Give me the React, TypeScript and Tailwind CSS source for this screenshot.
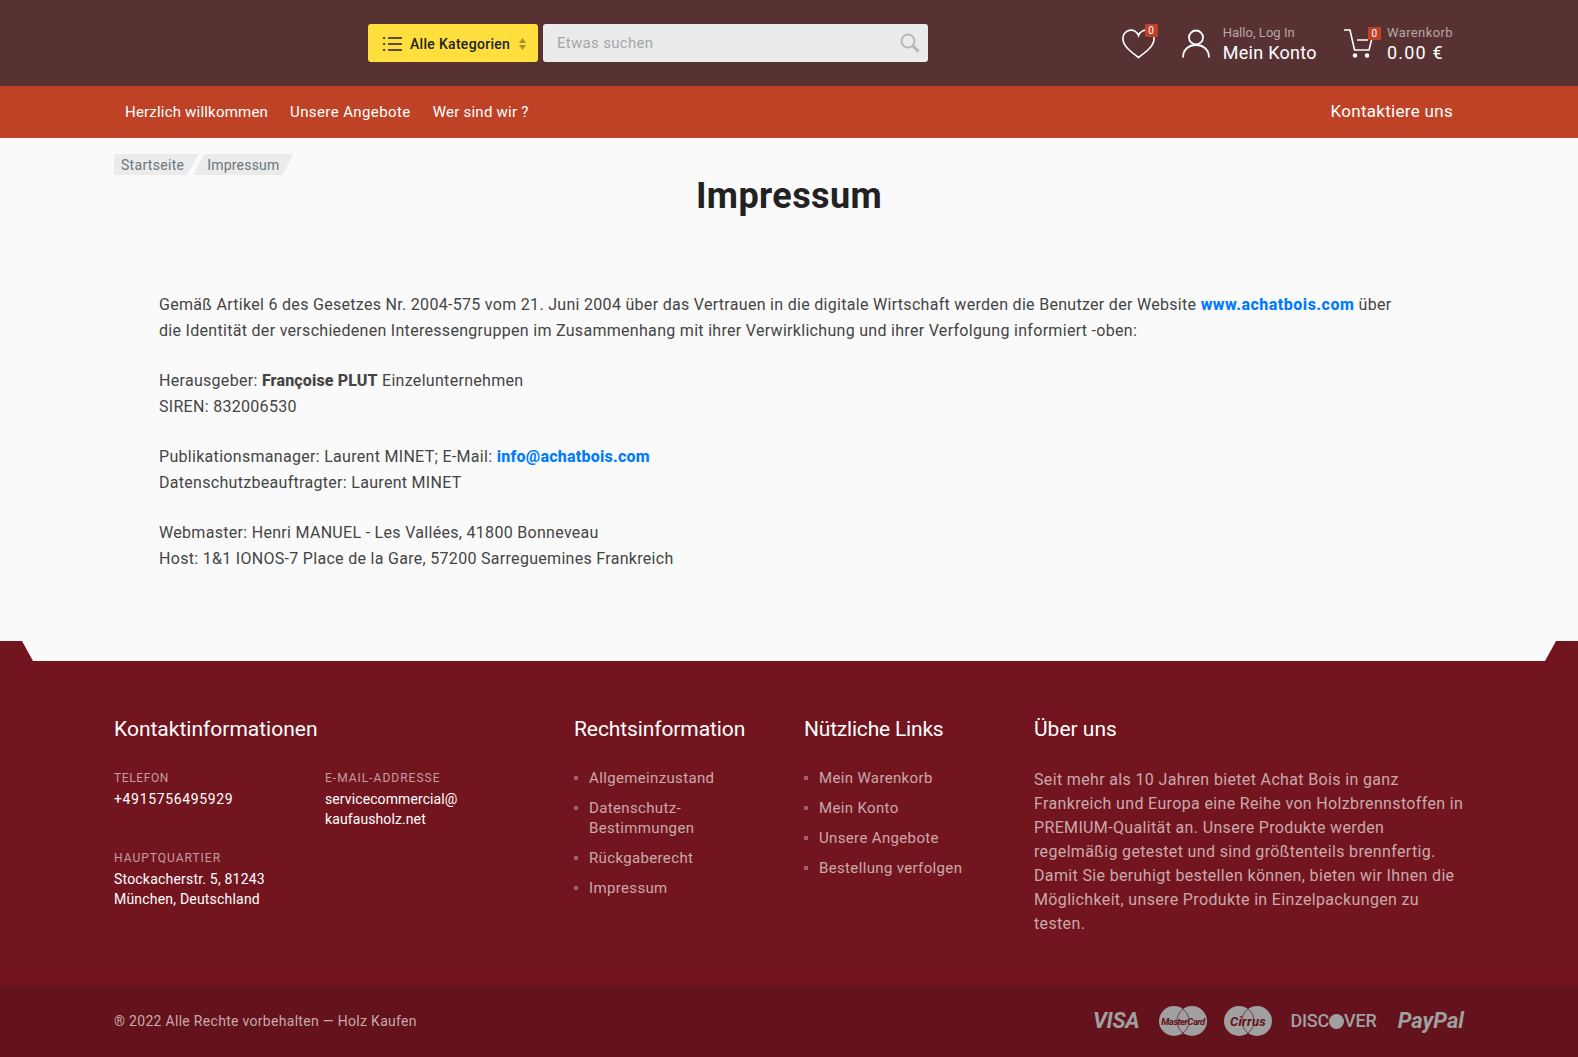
import React from 'react';

const legal = ['Allgemeinzustand', 'Datenschutz-\nBestimmungen', 'Rückgaberecht', 'Impressum'];
const useful = ['Mein Warenkorb', 'Mein Konto', 'Unsere Angebote', 'Bestellung verfolgen'];

const FooterList = ({ items }: { items: string[] }) => (
  <ul className="mt-[25px] flex flex-col gap-2.5">
    {items.map(item => (
      <li key={item} className="flex text-[15px] leading-5 text-[#c9a9ac] whitespace-pre-line tracking-[0.35px]">
        <span className="mt-2 mr-[11px] w-1 h-1 shrink-0 bg-[#9c6168]" />
        {item}
      </li>
    ))}
  </ul>
);

const Badge = ({ className }: { className: string }) => (
  <span className={`absolute w-[13px] h-[13px] bg-[#bf4226] text-white text-[10px] leading-[13px] text-center rounded-[1px] ${className}`}>0</span>
);

const PaymentLogos = () => (
  <div className="flex items-center text-[#a0a0a0]">
    <span className="text-[22px] font-bold italic tracking-[-0.3px] leading-none mr-5">VISA</span>
    <svg width="48" height="30" viewBox="0 0 48 30" className="mr-[17px]">
      <circle cx="15" cy="15" r="15" fill="#a0a0a0" />
      <circle cx="33" cy="15" r="15" fill="#a0a0a0" />
      <path d="M24 3a15 15 0 0 1 0 24a15 15 0 0 1 0-24z" fill="none" stroke="#64121b" strokeWidth="0.7" />
      <text x="24" y="18.500" textAnchor="middle" fontSize="9.500" fontWeight="700" fontStyle="italic" fill="#64121b" letterSpacing="-0.5">MasterCard</text>
    </svg>
    <svg width="48" height="30" viewBox="0 0 48 30" className="mr-[18px]">
      <circle cx="15" cy="15" r="15" fill="#a0a0a0" />
      <circle cx="33" cy="15" r="15" fill="#a0a0a0" />
      <path d="M24 3a15 15 0 0 1 0 24a15 15 0 0 1 0-24z" fill="none" stroke="#64121b" strokeWidth="0.7" />
      <text x="24" y="19.500" textAnchor="middle" fontSize="13" fontWeight="700" fontStyle="italic" fill="#64121b">Cirrus</text>
    </svg>
    <span className="flex items-center text-[18px] tracking-[-0.2px] leading-none font-medium mr-[21px]">
      DISC<span className="inline-block w-[15px] h-[15px] rounded-full bg-[#a0a0a0]" />VER
    </span>
    <span className="text-[22px] font-bold italic leading-none tracking-[0px]">PayPal</span>
  </div>
);

export default function App() {
  return (
    <div className="min-h-[1057px] bg-[#fafafa] text-[#444] font-['Roboto',sans-serif] tracking-[0.3px]">
      <header className="h-[86px] bg-[#583232] flex items-center pl-[368px] pr-[125px]">
        <button className="w-[170px] h-[38px] bg-[#ffdf3d] rounded-[3px] flex items-center pl-3.5 pr-3 pt-px text-[#222] text-sm font-medium">
          <svg width="20" height="16" viewBox="0 0 20 16" className="mr-2 shrink-0" stroke="#222" strokeWidth="1.6">
            <path d="M6 2h14M6 8h14M6 14h14M1 2h2.2M1 8h2.2M1 14h2.2" />
          </svg>
          Alle Kategorien
          <svg width="7" height="12" viewBox="0 0 7 12" className="ml-auto" fill="#a89330">
            <path d="M3.500 0L7 5H0zM3.500 12L0 7h7z" />
          </svg>
        </button>
        <div className="ml-[5px] w-[385px] h-[38px] bg-[#ebebeb] rounded-[3px] flex items-center justify-between pl-3.5 pr-2 text-[#a3a7aa] text-[15px]">
          Etwas suchen
          <svg width="20" height="20" viewBox="0 0 20 20" fill="none" stroke="#b5b5b5">
            <circle cx="8" cy="8" r="6.500" strokeWidth="1.800" />
            <path d="M12.500 12.500L18.500 18.500" strokeWidth="3" />
          </svg>
        </div>
        <div className="ml-auto flex items-center text-white">
          <div className="relative w-[36px] h-[34px] mr-6">
            <svg width="33" height="30" viewBox="0 0 33 30" fill="none" stroke="white" strokeWidth="1.600" className="mt-[3px]">
              <path d="M16.500 28.500C9 23 1 17 1 10A8 8 0 0 1 16.500 6.500A8 8 0 0 1 32 10c0 7-8 13-15.500 18.500z" />
            </svg>
            <Badge className="-top-[2px] right-0" />
          </div>
          <svg width="28" height="29" viewBox="0 0 28 29" fill="none" stroke="white" strokeWidth="1.800" className="mr-[13px]">
            <circle cx="14" cy="8.500" r="7" />
            <path d="M1 28.500c0-8 6-12.500 13-12.500s13 4.500 13 12.500" />
          </svg>
          <div className="mr-[27px]">
            <p className="text-[13px] leading-4 text-[#b9a6a6] mt-[3px] tracking-[0.05px]">Hallo, Log In</p>
            <p className="text-lg leading-6 tracking-[0.3px]">Mein Konto</p>
          </div>
          <div className="relative w-[32px] h-[29px] mr-[11px]">
            <svg width="32" height="29" viewBox="0 0 32 29" fill="none" stroke="white" strokeWidth="1.600">
              <path d="M0 1h6l4.500 20h14.500l3-12M13 11h11" />
              <circle cx="11" cy="26.500" r="1.500" fill="white" />
              <circle cx="23" cy="26.500" r="1.500" fill="white" />
            </svg>
            <Badge className="-top-[2px] -right-[5px]" />
          </div>
          <div>
            <p className="text-[13px] leading-4 text-[#b9a6a6] mt-[3px] tracking-[0.4px]">Warenkorb</p>
            <p className="text-lg leading-6 tracking-[1.2px]">0.00 €</p>
          </div>
        </div>
      </header>

      <nav className="h-[52px] bg-[#bf4226] flex items-center pl-[125px] pr-[125px] text-white text-[15px] tracking-[0.4px]">
        <a className="mr-[22px] tracking-[0.2px]">Herzlich willkommen</a>
        <a className="mr-[22px]">Unsere Angebote</a>
        <a className="tracking-[0.25px]">Wer sind wir ?</a>
        <a className="ml-auto text-[17px] tracking-[0.3px]">Kontaktiere uns</a>
      </nav>

      <main className="h-[503px] px-[114px] pt-4">
        <div className="flex text-sm leading-[22px] text-[#6c757d] h-[21px]">
          <span className="pl-[7px] pr-[14px] bg-[#ebebeb] [clip-path:polygon(0_0,100%_0,calc(100%-11px)_100%,0_100%)]">Startseite</span>
          <span className="-ml-[5px] pl-[14px] pr-[14px] tracking-[0.2px] bg-[#ebebeb] [clip-path:polygon(11px_0,100%_0,calc(100%-11px)_100%,0_100%)]">Impressum</span>
        </div>
        <h1 className="text-center text-[36px] leading-[44px] font-bold text-[#222] -mt-[1px] tracking-[0.4px]">Impressum</h1>
        <div className="mt-[74px] ml-[45px] mr-[60px] text-base leading-[26px] flex flex-col gap-6">
          <p>
            Gemäß Artikel 6 des Gesetzes Nr. 2004-575 vom 21. Juni 2004 über das Vertrauen in die digitale Wirtschaft werden die Benutzer der Website <b className="text-[#007bff] font-extrabold tracking-[0.5px]">www.achatbois.com</b> über die Identität der verschiedenen Interessengruppen im Zusammenhang mit ihrer Verwirklichung und ihrer Verfolgung informiert -oben:
          </p>
          <p>
            Herausgeber: <b className="font-extrabold tracking-[0.15px]">Françoise PLUT</b> Einzelunternehmen<br />SIREN: 832006530
          </p>
          <p>
            Publikationsmanager: Laurent MINET; E-Mail: <b className="text-[#007bff] font-extrabold tracking-[0.25px]">info@achatbois.com</b><br />Datenschutzbeauftragter: Laurent MINET
          </p>
          <p>
            Webmaster: Henri MANUEL - Les Vallées, 41800 Bonneveau<br />Host: 1&amp;1 IONOS-7 Place de la Gare, 57200 Sarreguemines Frankreich
          </p>
        </div>
      </main>

      <footer className="relative bg-[#73151f]">
        <div className="absolute top-0 left-0 right-0 h-5 bg-[#fafafa] [clip-path:polygon(22px_0,calc(100%-22px)_0,calc(100%-33px)_100%,33px_100%)]" />
        <div className="h-[344px] px-[114px] pt-[74px] flex">
          <section className="w-[460px]">
            <h3 className="text-[21px] leading-7 text-white tracking-[0px]">Kontaktinformationen</h3>
            <div className="mt-[27px] grid grid-cols-[211px_1fr] gap-y-[21px] text-sm leading-5 text-white">
              <div>
                <p className="text-xs leading-4 tracking-[0.6px] text-[#c49ea3]">TELEFON</p>
                <p className="mt-[3px] tracking-[0.65px]">+4915756495929</p>
              </div>
              <div>
                <p className="text-xs leading-4 tracking-[1px] text-[#c49ea3]">E-MAIL-ADDRESSE</p>
                <p className="mt-[3px] tracking-[0.1px]">servicecommercial@<br />kaufausholz.net</p>
              </div>
              <div>
                <p className="text-xs leading-4 tracking-[1px] text-[#c49ea3]">HAUPTQUARTIER</p>
                <p className="mt-[3px] tracking-[0.2px]">Stockacherstr. 5, 81243<br />München, Deutschland</p>
              </div>
            </div>
          </section>
          <section className="w-[230px]">
            <h3 className="text-[21px] leading-7 text-white tracking-[-0.1px]">Rechtsinformation</h3>
            <FooterList items={legal} />
          </section>
          <section className="w-[230px]">
            <h3 className="text-[21px] leading-7 text-white tracking-[-0.2px]">Nützliche Links</h3>
            <FooterList items={useful} />
          </section>
          <section className="w-[430px]">
            <h3 className="text-[21px] leading-7 text-white tracking-[0px]">Über uns</h3>
            <p className="mt-[25px] text-base leading-6 text-[#c9a9ac] whitespace-nowrap tracking-[0.35px]">
              Seit mehr als 10 Jahren bietet Achat Bois in ganz<br />
              Frankreich und Europa eine Reihe von Holzbrennstoffen in<br />
              PREMIUM-Qualität an. Unsere Produkte werden<br />
              regelmäßig getestet und sind größtenteils brennfertig.<br />
              Damit Sie beruhigt bestellen können, bieten wir Ihnen die<br />
              Möglichkeit, unsere Produkte in Einzelpackungen zu<br />
              testen.
            </p>
          </section>
        </div>
        <div className="h-[72px] bg-[#64121b] px-[114px] flex items-center justify-between">
          <p className="text-sm text-[#c9a9ac]">® 2022 Alle Rechte vorbehalten — Holz Kaufen</p>
          <PaymentLogos />
        </div>
      </footer>
    </div>
  );
}
